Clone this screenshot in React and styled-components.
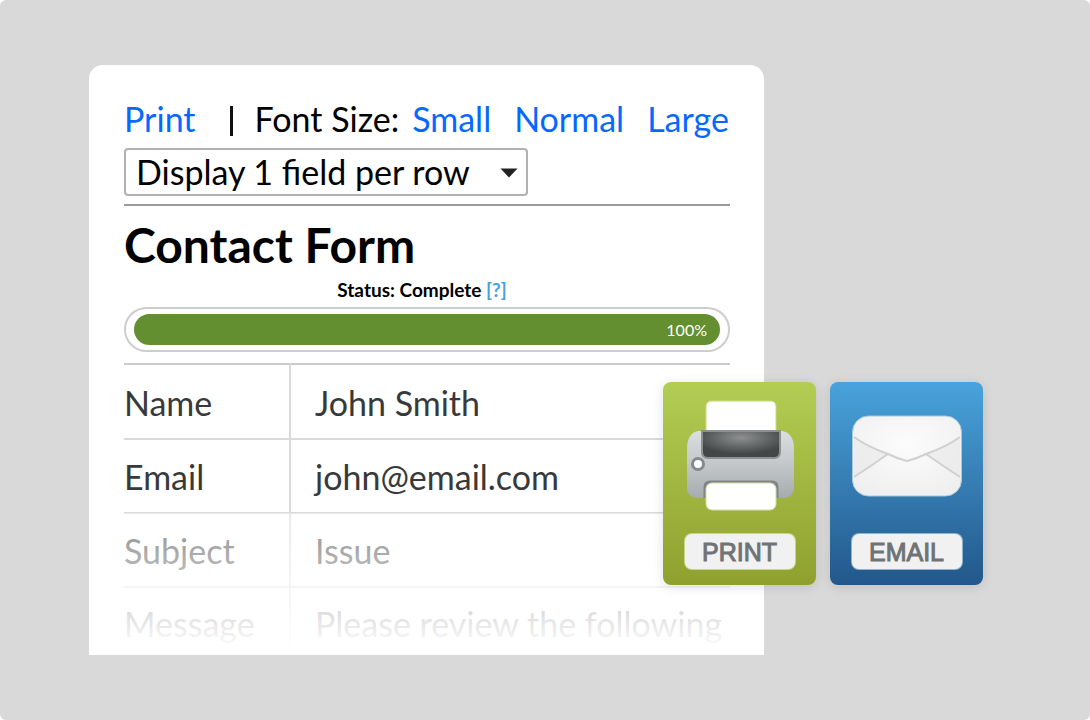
import React from "react";
import styled, { createGlobalStyle } from "styled-components";

const GlobalStyle = createGlobalStyle`
  * { box-sizing: border-box; }
  body {
    margin: 0;
    background: #fff;
    color: #000;
    font-family: Lato, "Liberation Sans", sans-serif;
  }
`;

const Stage = styled.main`
  min-height: 100vh;
  padding: 65px 107px 65px 89px;
  border-radius: 6px;
  background: #d9d9d9;
`;

const Scene = styled.div`
  position: relative;
`;

const Card = styled.section`
  position: relative;
  margin-right: 219px;
  padding: 34px 34px 0 35px;
  border-radius: 14px 14px 0 0;
  background: #fff;

  &::after {
    content: "";
    position: absolute;
    inset: auto 0 0;
    height: 142px;
    pointer-events: none;
    background: linear-gradient(rgba(255, 255, 255, 0.4), #fff 138px);
  }
`;

const Toolbar = styled.nav`
  display: flex;
  align-items: center;
  height: 40px;
  font-size: 34px;
  line-height: 40px;
  white-space: nowrap;
`;

const ToolLink = styled.a`
  color: #0669ff;
  text-decoration: none;
`;

const Divider = styled.span`
  align-self: flex-end;
  width: 3px;
  height: 30px;
  margin: 0 22px 3px 34px;
  background: #111;
`;

const SizeGroup = styled.div`
  display: flex;
  gap: 23px;
`;

const SizeLabel = styled.span`
  margin-right: 13px;
`;

const SelectBox = styled.div`
  position: relative;
  width: 404px;
  max-width: 100%;
  margin-top: 9px;
`;

const Select = styled.select`
  display: block;
  width: 100%;
  height: 48px;
  padding: 0 40px 0 10px;
  border: 2px solid #b1b1b1;
  border-radius: 4px;
  appearance: none;
  background: #fff;
  color: #000;
  font: 34px/40px Lato, "Liberation Sans", sans-serif;
`;

const Arrow = styled.svg`
  position: absolute;
  right: 10px;
  top: 20px;
  width: 18px;
  height: 10px;
  pointer-events: none;
`;

const Rule = styled.hr`
  height: 2px;
  margin: 8px 0 0;
  border: 0;
  background: #9b9b9b;
`;

const Title = styled.h1`
  margin: 11px 0 0;
  font-size: 48px;
  line-height: 56px;
  font-weight: 700;
`;

const Status = styled.p`
  margin: 5px 0;
  padding-right: 10px;
  font-size: 19px;
  line-height: 24px;
  font-weight: 700;
  text-align: center;
`;

const HelpLink = styled.a`
  color: #45a3dc;
  text-decoration: none;
`;

const Track = styled.div`
  height: 45px;
  padding: 5px 8px;
  border: 2px solid #cdcdcd;
  border-radius: 23px;
`;

const Fill = styled.div`
  height: 31px;
  padding-right: 13px;
  border-radius: 16px;
  background: #638f30;
  color: #fff;
  font-size: 16px;
  line-height: 31px;
  text-align: right;
`;

const Entries = styled.table`
  width: 100%;
  margin-top: 11px;
  border-collapse: separate;
  border-spacing: 0;
  table-layout: fixed;
  color: #38393a;
  font-size: 34px;
  line-height: 40px;
`;

const Row = styled.tr`
  > * {
    height: 74px;
    padding: 2px 0 0;
    border-top: 2px solid #dadada;
  }
  &:first-child > * {
    height: 75px;
    border-top-color: #cbcbcb;
  }
  &:last-child > * {
    height: 69px;
    padding-top: 4px;
  }
`;

const Label = styled.th`
  width: 167px;
  border-right: 2px solid #dadada;
  font-weight: 400;
  text-align: left;
`;

const Value = styled.td`
  text-indent: 24px;
  white-space: nowrap;
`;

const Actions = styled.div`
  position: absolute;
  right: 0;
  top: 317px;
  display: flex;
  gap: 14px;
`;

const Tile = styled.button`
  display: flex;
  flex-direction: column;
  align-items: center;
  justify-content: space-between;
  width: 153px;
  height: 203px;
  padding: 18px 0 16px;
  border: 0;
  border-radius: 8px;
  background: linear-gradient(${(p) => p.$from}, ${(p) => p.$to});
  box-shadow: 0 2px 12px rgba(0, 0, 0, 0.12);
  cursor: pointer;
`;

const TileIcon = styled.svg`
  width: 112px;
  height: 112px;
`;

const TileLabel = styled.span`
  width: 110px;
  padding-top: 1px;
  border-radius: 7px;
  background: #f1f1f1;
  box-shadow: 0 0 0 1px ${(p) => p.$edge};
  color: #6f7375;
  font: 25px/34px "Liberation Sans", Arial, sans-serif;
  -webkit-text-stroke: 1px #6f7375;
`;

const PrinterIcon = () => (
  <TileIcon viewBox="0 0 112 112" aria-hidden="true">
    <defs>
      <linearGradient id="printer-body" x1="0" y1="0" x2="0" y2="1">
        <stop offset="0" stopColor="#dcdedf" />
        <stop offset="0.5" stopColor="#c3c7ca" />
        <stop offset="1" stopColor="#a6abae" />
      </linearGradient>
      <radialGradient id="printer-slot" cx="0.5" cy="0.25" r="0.6">
        <stop offset="0" stopColor="#8d8f90" />
        <stop offset="1" stopColor="#444748" />
      </radialGradient>
    </defs>
    <rect x="22" y="1" width="70" height="50" rx="5" fill="#fff" stroke="#c8dc7d" />
    <path d="M14 31H98C106 32 110 39 110 48V88C110 94 106 98 99 98H15C7 98 3 94 3 88V48C3 39 7 32 14 31Z" fill="url(#printer-body)" />
    <path d="M18 31H96V52Q96 58 90 58H24Q18 58 18 52Z" fill="url(#printer-slot)" stroke="#8c9092" strokeWidth="2" />
    <path d="M21 98V87Q21 82 26 82H88Q93 82 93 87V98" fill="none" stroke="#7e8487" strokeWidth="3" />
    <rect x="22" y="83" width="70" height="27" rx="6" fill="#fff" stroke="#d3df9d" />
    <circle cx="14" cy="64" r="5.5" fill="#fff" stroke="#85898b" strokeWidth="3" />
  </TileIcon>
);

const EnvelopeIcon = () => (
  <TileIcon viewBox="0 0 112 112" aria-hidden="true">
    <defs>
      <radialGradient id="envelope-paper" cx="0.5" cy="0.35" r="0.75">
        <stop offset="0" stopColor="#fcfcfc" />
        <stop offset="1" stopColor="#eeeeee" />
      </radialGradient>
    </defs>
    <rect x="1.5" y="16" width="109" height="80" rx="16" fill="url(#envelope-paper)" stroke="#a5c9e0" />
    <path d="M3 77V37Q18 47 37 54Q20 66 3 77ZM109 77V37Q94 47 75 54Q92 66 109 77Z" fill="#e7e7e7" opacity="0.6" />
    <path d="M3 37Q17 47 37 54Q47 59 56 61Q65 59 75 54Q95 47 109 37M3 77Q20 66 37 54M109 77Q92 66 75 54" fill="none" stroke="#d0d0d0" strokeWidth="2" />
  </TileIcon>
);

const entries = [
  ["Name", "John Smith"],
  ["Email", "john@email.com"],
  ["Subject", "Issue"],
  ["Message", "Please review the following"],
];

export default function App() {
  return (
    <>
      <GlobalStyle />
      <Stage>
        <Scene>
          <Card>
            <Toolbar>
              <ToolLink href="#print">Print</ToolLink>
              <Divider />
              <SizeLabel>Font Size:</SizeLabel>
              <SizeGroup>
                <ToolLink href="#small">Small</ToolLink>
                <ToolLink href="#normal">Normal</ToolLink>
                <ToolLink href="#large">Large</ToolLink>
              </SizeGroup>
            </Toolbar>
            <SelectBox>
              <Select aria-label="Fields per row" defaultValue="1">
                <option value="1">Display 1 field per row</option>
                <option value="2">Display 2 fields per row</option>
              </Select>
              <Arrow viewBox="0 0 18 10" aria-hidden="true">
                <path d="M0.5 0.5H17.5L9 9.5Z" fill="#222" />
              </Arrow>
            </SelectBox>
            <Rule />
            <Title>Contact Form</Title>
            <Status>
              Status: Complete <HelpLink href="#help">[?]</HelpLink>
            </Status>
            <Track role="progressbar" aria-label="Status" aria-valuemin={0} aria-valuemax={100} aria-valuenow={100}>
              <Fill>100%</Fill>
            </Track>
            <Entries>
              <tbody>
                {entries.map(([label, value]) => (
                  <Row key={label}>
                    <Label scope="row">{label}</Label>
                    <Value>{value}</Value>
                  </Row>
                ))}
              </tbody>
            </Entries>
          </Card>
          <Actions>
            <Tile type="button" $from="#b3cd53" $to="#8fa02e">
              <PrinterIcon />
              <TileLabel $edge="#c5d68a">PRINT</TileLabel>
            </Tile>
            <Tile type="button" $from="#49a3dc" $to="#22578a">
              <EnvelopeIcon />
              <TileLabel $edge="#8fb4cf">EMAIL</TileLabel>
            </Tile>
          </Actions>
        </Scene>
      </Stage>
    </>
  );
}
